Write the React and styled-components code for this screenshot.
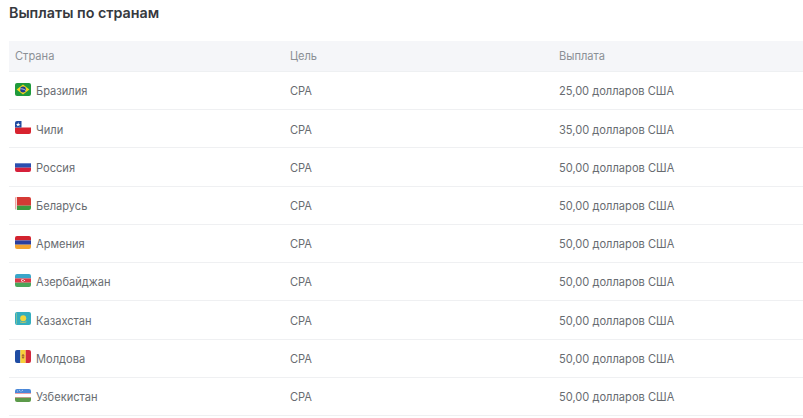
import React from 'react';
import styled, { createGlobalStyle } from 'styled-components';

const GlobalStyle = createGlobalStyle`
  html, body {
    margin: 0;
    padding: 0;
    background: #fff;
  }
  body {
    font-family: Inter, "Liberation Sans", sans-serif;
    overflow: hidden;
  }
`;

const Flag = ({ children }) => (
  <FlagIcon viewBox="0 0 16 13" aria-hidden="true">
    {children}
  </FlagIcon>
);

const flags = {
  brazil: (
    <>
      <rect width="16" height="13" fill="#1f9a3c" />
      <path d="M8 1.6 14.4 6.5 8 11.4 1.6 6.5Z" fill="#f7d51d" />
      <circle cx="8" cy="6.5" r="2.9" fill="#1c3f8f" />
      <path d="M5.2 5.9C7 5.6 9.2 6.2 10.8 7.5" stroke="#fff" strokeWidth=".7" fill="none" />
    </>
  ),
  chile: (
    <>
      <rect width="16" height="6.5" fill="#fff" />
      <rect y="6.5" width="16" height="6.5" fill="#d8232f" />
      <rect width="6.5" height="6.5" fill="#1f4aa0" />
      <path d="M3.2 1.2 3.8 2.9 5.5 2.9 4.1 4 4.6 5.5 3.2 4.6 1.8 5.5 2.3 4 .9 2.9 2.6 2.9Z" fill="#fff" />
    </>
  ),
  russia: (
    <>
      <rect width="16" height="4.3" fill="#fff" />
      <rect y="4.3" width="16" height="4.4" fill="#2a4fb0" />
      <rect y="8.7" width="16" height="4.3" fill="#d6203a" />
    </>
  ),
  belarus: (
    <>
      <rect width="16" height="8.7" fill="#d53a35" />
      <rect y="8.7" width="16" height="4.3" fill="#3f9a3f" />
      <rect width="2" height="13" fill="#fff" />
      <path d="M0 1h2M0 3h2M0 5h2M0 7h2M0 9h2M0 11h2" stroke="#d53a35" strokeWidth=".9" strokeDasharray="1 .6" />
    </>
  ),
  armenia: (
    <>
      <rect width="16" height="4.4" fill="#d2232f" />
      <rect y="4.4" width="16" height="4.3" fill="#2a3f9f" />
      <rect y="8.7" width="16" height="4.3" fill="#f2a330" />
    </>
  ),
  azerbaijan: (
    <>
      <rect width="16" height="4.4" fill="#3aa6c9" />
      <rect y="4.4" width="16" height="4.3" fill="#dc3a48" />
      <rect y="8.7" width="16" height="4.3" fill="#4aa65a" />
      <circle cx="7.6" cy="6.5" r="1.4" fill="#fff" />
      <circle cx="8" cy="6.5" r="1.1" fill="#dc3a48" />
      <circle cx="9.4" cy="6.5" r=".6" fill="#fff" />
    </>
  ),
  kazakhstan: (
    <>
      <rect width="16" height="13" fill="#34aebf" />
      <circle cx="8.2" cy="6.2" r="3" fill="#f1d63c" />
      <path d="M5 9.8c2 .9 4.4.9 6.4 0" stroke="#e3cf4b" strokeWidth=".8" fill="none" />
      <rect x="1.1" y="1" width=".9" height="11" fill="#7fc09a" />
    </>
  ),
  moldova: (
    <>
      <rect width="5.4" height="13" fill="#1f4ca3" />
      <rect x="5.4" width="5.3" height="13" fill="#f6cf3a" />
      <rect x="10.7" width="5.3" height="13" fill="#d3283c" />
      <rect x="6.9" y="4.2" width="2.3" height="4.4" rx="1" fill="#a7672f" />
      <circle cx="8" cy="6.4" r=".7" fill="#e0a03c" />
    </>
  ),
  uzbekistan: (
    <>
      <rect width="16" height="4" fill="#4a87d8" />
      <rect y="4" width="16" height="4.6" fill="#fff" />
      <rect y="4" width="16" height=".5" fill="#d9434e" />
      <rect y="8.2" width="16" height=".5" fill="#d9434e" />
      <rect y="8.7" width="16" height="4.3" fill="#5c9a4a" />
      <path d="M2 2h.8M4 1.4h.8M5.6 2.2h.8M7.2 1.4h.8" stroke="#fff" strokeWidth=".7" />
    </>
  ),
};

const rows = [
  { flag: 'brazil', country: 'Бразилия', payout: '25,00 долларов США' },
  { flag: 'chile', country: 'Чили', payout: '35,00 долларов США' },
  { flag: 'russia', country: 'Россия', payout: '50,00 долларов США' },
  { flag: 'belarus', country: 'Беларусь', payout: '50,00 долларов США' },
  { flag: 'armenia', country: 'Армения', payout: '50,00 долларов США' },
  { flag: 'azerbaijan', country: 'Азербайджан', payout: '50,00 долларов США' },
  { flag: 'kazakhstan', country: 'Казахстан', payout: '50,00 долларов США' },
  { flag: 'moldova', country: 'Молдова', payout: '50,00 долларов США' },
  { flag: 'uzbekistan', country: 'Узбекистан', payout: '50,00 долларов США' },
];

function App() {
  return (
    <Page>
      <GlobalStyle />
      <Title>Выплаты по странам</Title>
      <HeaderRow>
        <Cell>Страна</Cell>
        <Cell>Цель</Cell>
        <Cell>Выплата</Cell>
      </HeaderRow>
      {rows.map((row) => (
        <Row key={row.country}>
          <CountryCell>
            <Flag>{flags[row.flag]}</Flag>
            {row.country}
          </CountryCell>
          <Cell>CPA</Cell>
          <Cell>{row.payout}</Cell>
        </Row>
      ))}
    </Page>
  );
}

export default App;

const Page = styled.div`
  width: 803px;
  height: 418px;
  padding-left: 9px;
  box-sizing: border-box;
  overflow: hidden;
`;

const Title = styled.h2`
  margin: 0;
  height: 41px;
  padding-top: 4px;
  box-sizing: border-box;
  font-size: 14.3px;
  line-height: 18px;
  font-weight: 600;
  color: #36393e;
`;

const HeaderRow = styled.div`
  display: grid;
  grid-template-columns: 275px 269px 1fr;
  align-items: center;
  height: 31px;
  box-sizing: border-box;
  background: #f5f6f9;
  border-bottom: 1px solid #eef0f2;
  font-size: 11.1px;
  color: #8b9096;
`;

const Row = styled.div`
  display: grid;
  grid-template-columns: 275px 269px 1fr;
  align-items: center;
  height: 38.22px;
  box-sizing: border-box;
  padding-top: 1.4px;
  border-bottom: 1px solid #eff0f2;
  font-size: 11.1px;
  color: #686c71;
`;

const Cell = styled.div`
  padding-left: 6px;
  white-space: nowrap;
`;

const CountryCell = styled(Cell)`
  display: flex;
  align-items: center;
  gap: 5px;
`;

const FlagIcon = styled.svg`
  width: 16px;
  height: 13px;
  border-radius: 2px;
  margin-top: -4px;
  flex: none;
`;
